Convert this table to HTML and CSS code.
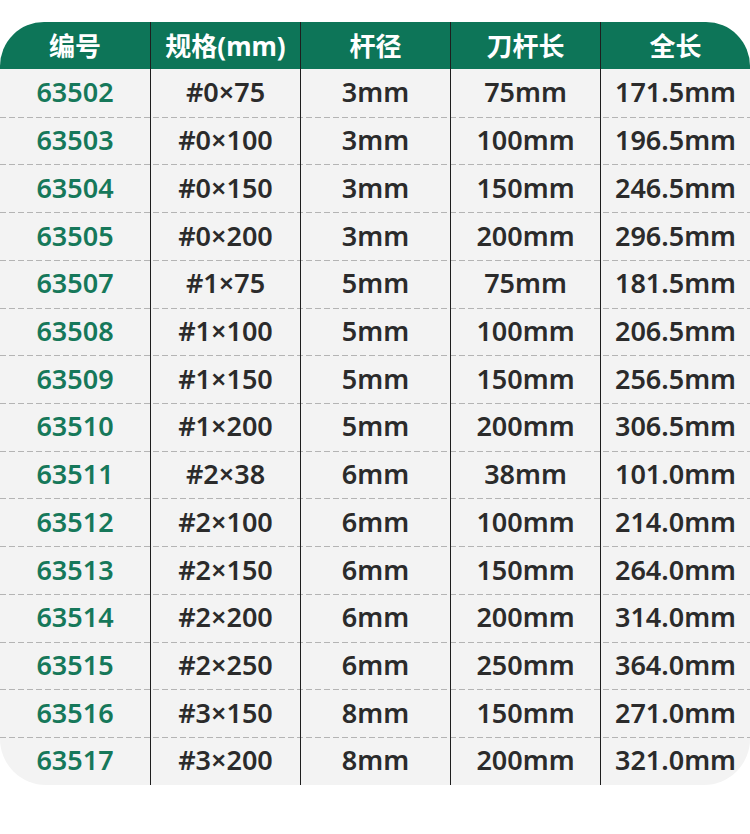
FILE: index.html
```html
<!DOCTYPE html>
<html lang="zh">
<head>
<meta charset="utf-8">
<link rel="stylesheet" href="styles.css">
</head>
<body>
<div class="sheet">
  <div class="row head">
    <div class="c">编号</div><div class="c">规格(mm)</div><div class="c">杆径</div><div class="c">刀杆长</div><div class="c">全长</div>
  </div>
  <div class="body">
    <div class="row"><div class="c id">63502</div><div class="c">#0×75</div><div class="c">3mm</div><div class="c">75mm</div><div class="c">171.5mm</div></div>
    <div class="row"><div class="c id">63503</div><div class="c">#0×100</div><div class="c">3mm</div><div class="c">100mm</div><div class="c">196.5mm</div></div>
    <div class="row"><div class="c id">63504</div><div class="c">#0×150</div><div class="c">3mm</div><div class="c">150mm</div><div class="c">246.5mm</div></div>
    <div class="row"><div class="c id">63505</div><div class="c">#0×200</div><div class="c">3mm</div><div class="c">200mm</div><div class="c">296.5mm</div></div>
    <div class="row"><div class="c id">63507</div><div class="c">#1×75</div><div class="c">5mm</div><div class="c">75mm</div><div class="c">181.5mm</div></div>
    <div class="row"><div class="c id">63508</div><div class="c">#1×100</div><div class="c">5mm</div><div class="c">100mm</div><div class="c">206.5mm</div></div>
    <div class="row"><div class="c id">63509</div><div class="c">#1×150</div><div class="c">5mm</div><div class="c">150mm</div><div class="c">256.5mm</div></div>
    <div class="row"><div class="c id">63510</div><div class="c">#1×200</div><div class="c">5mm</div><div class="c">200mm</div><div class="c">306.5mm</div></div>
    <div class="row"><div class="c id">63511</div><div class="c">#2×38</div><div class="c">6mm</div><div class="c">38mm</div><div class="c">101.0mm</div></div>
    <div class="row"><div class="c id">63512</div><div class="c">#2×100</div><div class="c">6mm</div><div class="c">100mm</div><div class="c">214.0mm</div></div>
    <div class="row"><div class="c id">63513</div><div class="c">#2×150</div><div class="c">6mm</div><div class="c">150mm</div><div class="c">264.0mm</div></div>
    <div class="row"><div class="c id">63514</div><div class="c">#2×200</div><div class="c">6mm</div><div class="c">200mm</div><div class="c">314.0mm</div></div>
    <div class="row"><div class="c id">63515</div><div class="c">#2×250</div><div class="c">6mm</div><div class="c">250mm</div><div class="c">364.0mm</div></div>
    <div class="row"><div class="c id">63516</div><div class="c">#3×150</div><div class="c">8mm</div><div class="c">150mm</div><div class="c">271.0mm</div></div>
    <div class="row"><div class="c id">63517</div><div class="c">#3×200</div><div class="c">8mm</div><div class="c">200mm</div><div class="c">321.0mm</div></div>
  </div>
</div>
</body>
</html>
```
FILE: styles.css
```css
html, body {
  margin: 0;
  padding: 0;
  background: #ffffff;
}
body {
  font-family: "Noto Sans", "Noto Sans CJK SC", sans-serif;
}
.sheet {
  width: 750px;
  padding-top: 22px;
}
.row {
  display: grid;
  grid-template-columns: repeat(5, 150px);
  height: 47.73px;
}
.head {
  height: 47px;
  background: #0d7558;
  border-radius: 44px 44px 0 0;
  color: #ffffff;
  font-size: 26px;
  font-weight: 700;
}
.body {
  background: #f3f3f3;
  border-radius: 0 0 46px 46px;
}
.body .row + .row {
  background-image: linear-gradient(to right, #b4b4b4 0 6px, transparent 6px 9px);
  background-size: 9px 1px;
  background-repeat: repeat-x;
  background-position: 0 0;
}
.c {
  display: flex;
  align-items: center;
  justify-content: center;
  line-height: 1;
}
.c + .c {
  border-left: 1px solid #1e1e1e;
}
.body .c {
  font-size: 27px;
  font-weight: 600;
  color: #2b2b2b;
  padding-bottom: 2px;
}
.body .c.id {
  color: #16785a;
}
```
